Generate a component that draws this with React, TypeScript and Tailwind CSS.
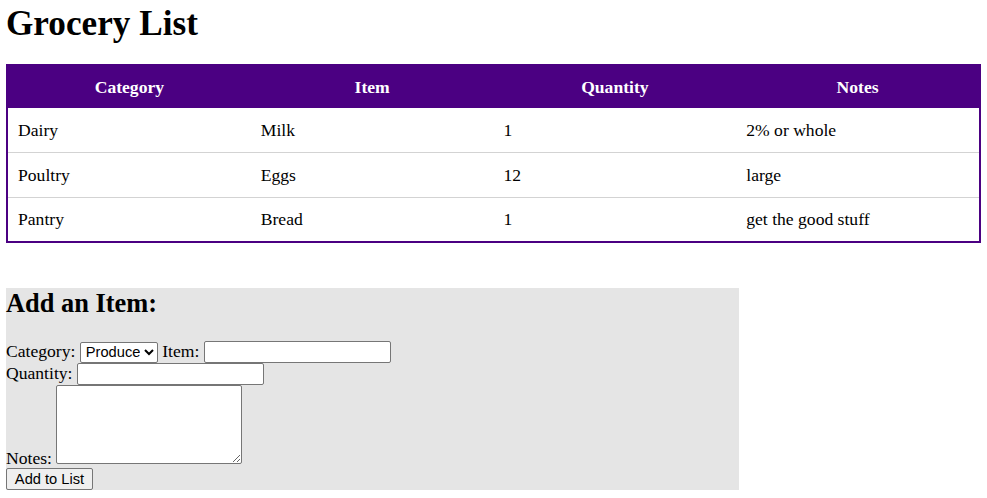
import React from "react";

const rows = [
  { category: "Dairy", item: "Milk", quantity: "1", notes: "2% or whole" },
  { category: "Poultry", item: "Eggs", quantity: "12", notes: "large" },
  { category: "Pantry", item: "Bread", quantity: "1", notes: "get the good stuff" },
];

const control =
  "border border-[#767676] rounded-[2px] bg-white text-black font-['Liberation_Sans',Arial,sans-serif] text-[14.67px] align-baseline";

export default function App() {
  return (
    <div className="min-h-screen bg-white px-[6px] text-black font-['Liberation_Serif','Times_New_Roman',serif] text-[17.6px]">
      <h1 className="pt-[4px] text-[35.2px] font-bold leading-[39px]">Grocery List</h1>

      <table className="mt-[21px] w-[975px] table-fixed border-separate border-spacing-0 border-2 border-[#4b0082]">
        <thead>
          <tr className="bg-[#4b0082] text-white h-[42px]">
            <th className="font-bold text-center">Category</th>
            <th className="font-bold text-center">Item</th>
            <th className="font-bold text-center">Quantity</th>
            <th className="font-bold text-center">Notes</th>
          </tr>
        </thead>
        <tbody>
          {rows.map((r, i) => {
            const last = i === rows.length - 1;
            const cell = last ? "px-[10px]" : "px-[10px] border-b border-[#d3d3d3]";
            return (
              <tr key={r.category} className={last ? "h-[43px]" : "h-[45px]"}>
                <td className={cell}>{r.category}</td>
                <td className={cell}>{r.item}</td>
                <td className={cell}>{r.quantity}</td>
                <td className={cell}>{r.notes}</td>
              </tr>
            );
          })}
        </tbody>
      </table>

      <section className="mt-[45px] w-[733px] bg-[#e5e5e5]">
        <h2 className="pt-[1px] text-[26.4px] font-bold leading-[29px] pb-[23px]">Add an Item:</h2>
        <form className="leading-[20px]">
          Category:{" "}
          <select className={`${control} w-[78px] h-[21px] px-[1px]`} defaultValue="Produce">
            <option>Produce</option>
            <option>Dairy</option>
            <option>Poultry</option>
            <option>Pantry</option>
          </select>{" "}
          Item: <input type="text" className={`${control} w-[187px] h-[22px] px-[2px]`} />
          <br />
          Quantity: <input type="text" className={`${control} w-[187px] h-[22px] px-[2px]`} />
          <br />
          Notes: <textarea className={`${control} w-[186px] h-[79px] p-[2px]`} />
          <br />
          <button
            type="button"
            className="w-[87px] h-[22px] border border-[#767676] rounded-[2px] bg-[#efefef] text-[14.67px] font-['Liberation_Sans',Arial,sans-serif] align-baseline"
          >
            Add to List
          </button>
        </form>
      </section>
    </div>
  );
}
